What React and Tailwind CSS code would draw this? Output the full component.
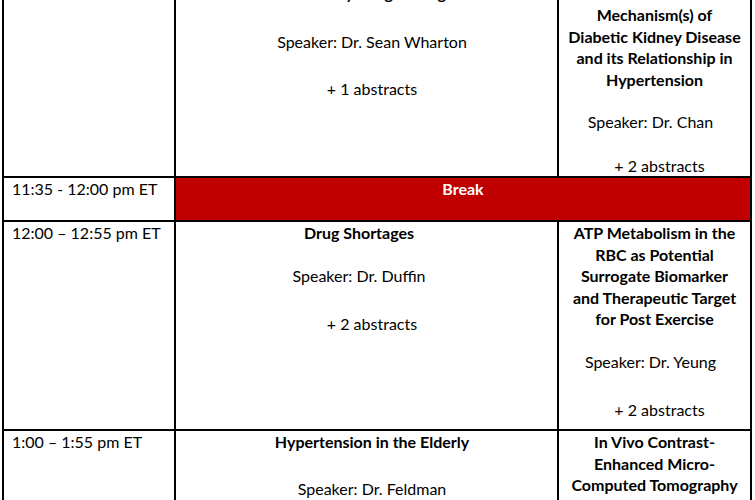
export default function App() {
	const font = { fontFamily: "Lato, 'Noto Sans', sans-serif" };

	return (
		<div className="w-[755px] h-[500px] overflow-hidden bg-white text-black text-[16px] leading-[21.5px]" style={font}>
			<div className="ml-[2px] mt-[-20px] w-[750px] grid grid-cols-[170px_381px_191px] gap-[2px] bg-black px-[2px] pb-[2px]">
				{/* Row 1 */}
				<div className="bg-white h-[196px]" />
				<div className="bg-white h-[196px] pt-[2px] pl-[11px] text-center">
					<div className="font-bold">Obesity Drug Pricing</div>
					<div className="mt-[27px]">Speaker: Dr. Sean Wharton</div>
					<div className="mt-[26px]">+ 1 abstracts</div>
				</div>
				<div className="bg-white h-[196px] pt-[24px] text-center">
					<div className="font-bold">
						Mechanism(s) of
						<br />
						Diabetic Kidney Disease
						<br />
						and its Relationship in
						<br />
						Hypertension
					</div>
					<div className="mt-[21px] pr-[8px]">Speaker: Dr. Chan</div>
					<div className="mt-[22px] pl-[10px]">+ 2 abstracts</div>
				</div>

				{/* Break */}
				<div className="bg-white h-[42px] pl-[8px]">11:35 - 12:00 pm ET</div>
				<div className="col-span-2 bg-[#c00000] h-[42px] text-center font-bold text-white">Break</div>

				{/* Row 3 */}
				<div className="bg-white h-[207px] pl-[8px]">12:00 – 12:55 pm ET</div>
				<div className="bg-white h-[207px] pr-[15px] text-center">
					<div className="font-bold">Drug Shortages</div>
					<div className="mt-[21.5px]">Speaker: Dr. Duffin</div>
					<div className="mt-[26.5px] pl-[26px]">+ 2 abstracts</div>
				</div>
				<div className="bg-white h-[207px] text-center">
					<div className="font-bold">
						ATP Metabolism in the
						<br />
						RBC as Potential
						<br />
						Surrogate Biomarker
						<br />
						and Therapeutic Target
						<br />
						for Post Exercise
					</div>
					<div className="mt-[21.5px] pr-[8px]">Speaker: Dr. Yeung</div>
					<div className="mt-[26.5px] pl-[10px]">+ 2 abstracts</div>
				</div>

				{/* Row 4 */}
				<div className="bg-white h-[120px] pl-[8px]">1:00 – 1:55 pm ET</div>
				<div className="bg-white h-[120px] pl-[11px] text-center">
					<div className="font-bold">Hypertension in the Elderly</div>
					<div className="mt-[25px]">Speaker: Dr. Feldman</div>
				</div>
				<div className="bg-white h-[120px] text-center font-bold">
					In Vivo Contrast-
					<br />
					Enhanced Micro-
					<br />
					Computed Tomography
				</div>
			</div>
		</div>
	);
}
